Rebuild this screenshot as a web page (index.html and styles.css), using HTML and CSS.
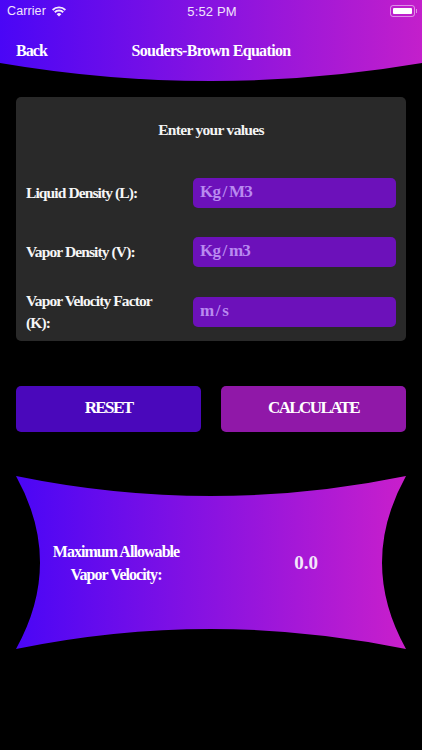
FILE: index.html
```html
<!DOCTYPE html>
<html lang="en">
<head>
<meta charset="utf-8">
<title>Souders-Brown Equation</title>
<link rel="stylesheet" href="styles.css">
</head>
<body>
<header class="header">
  <div class="status">
    <div class="status-left">
      <span>Carrier</span>
      <svg class="wifi" viewBox="0 0 16 12" aria-hidden="true"><path d="M8 11.8 5.3 9a3.8 3.8 0 0 1 5.4 0zM4 7.6 2.4 6a8 8 0 0 1 11.2 0L12 7.6a5.7 5.7 0 0 0-8 0zM1.4 5 0 3.5a11.4 11.4 0 0 1 16 0L14.6 5a9.4 9.4 0 0 0-13.2 0z"/></svg>
    </div>
    <div class="status-time">5:52 PM</div>
    <div class="status-right">
      <span class="battery"><span class="battery-fill"></span></span><span class="battery-cap"></span>
    </div>
  </div>
  <div class="nav">
    <span class="back">Back</span>
    <h1 class="title">Souders-Brown Equation</h1>
  </div>
</header>
<main class="content">
  <section class="panel">
    <h2 class="panel-title">Enter your values</h2>
    <div class="row row-first">
      <label class="row-label">Liquid Density (L):</label>
      <div class="field">Kg / M3</div>
    </div>
    <div class="row">
      <label class="row-label">Vapor Density (V):</label>
      <div class="field">Kg / m3</div>
    </div>
    <div class="row">
      <label class="row-label">Vapor Velocity Factor (K):</label>
      <div class="field">m / s</div>
    </div>
  </section>
  <div class="actions">
    <button class="btn btn-reset">RESET</button>
    <button class="btn btn-calc">CALCULATE</button>
  </div>
  <section class="result">
    <div class="result-label">Maximum Allowable<br>Vapor Velocity:</div>
    <div class="result-value">0.0</div>
  </section>
</main>
</body>
</html>
```
FILE: styles.css
```css
* { box-sizing: border-box; }
html, body { margin: 0; height: 100%; }
body {
  width: 422px;
  height: 750px;
  overflow: hidden;
  background: #000;
  color: #fff;
  font-family: "Liberation Serif", serif;
}
.header {
  height: 81px;
  padding-top: 1px;
  background: linear-gradient(90deg, #4a06f6 0%, #c31fcb 100%);
  clip-path: path("M0 0H422V63Q211 99 0 63Z");
}
.status {
  display: grid;
  grid-template-columns: 1fr auto 1fr;
  align-items: center;
  height: 20px;
  padding: 0 5px 0 7px;
  font: 400 12.5px "Liberation Sans", sans-serif;
  letter-spacing: .1px;
  color: #f1e3fb;
}
.status-left { display: flex; align-items: center; gap: 6px; }
.wifi { width: 14px; height: 11px; fill: #f4eafc; }
.status-time { font-size: 13px; letter-spacing: .15px; }
.status-right { display: flex; align-items: center; justify-content: flex-end; }
.battery {
  display: block;
  width: 25px;
  height: 12px;
  padding: 2px;
  border: 1px solid rgba(255,255,255,.5);
  border-radius: 3px;
}
.battery-fill { display: block; height: 100%; background: #fff; border-radius: 1px; }
.battery-cap { display: block; width: 1px; height: 4px; margin-left: 1px; background: rgba(255,255,255,.5); }
.nav {
  position: relative;
  height: 22px;
  margin-top: 19px;
  font-weight: 700;
  font-size: 16px;
  line-height: 22px;
  text-align: center;
}
.back { position: absolute; left: 16px; top: 0; letter-spacing: -.95px; }
.title { margin: 0; font: inherit; letter-spacing: -.66px; }
.content { padding: 16px 16px 0; }
.panel {
  height: 244px;
  padding: 1px 10px 0;
  background: #292929;
  border-radius: 5px;
}
.panel-title {
  margin: 0;
  height: 66px;
  font-size: 15.5px;
  line-height: 64px;
  font-weight: 700;
  text-align: center;
  letter-spacing: -.7px;
  color: #f4f4f4;
}
.row {
  display: grid;
  grid-template-columns: 167px 203px;
  grid-template-rows: 30px;
  align-items: center;
  margin-top: 29px;
}
.row-first { margin-top: 14px; }
.row:last-child { margin-top: 30px; }
.row-label {
  font-size: 15.5px;
  font-weight: 700;
  line-height: 22px;
  letter-spacing: -.9px;
  color: #f6f6f6;
  padding-right: 15px;
}
.field {
  height: 30px;
  padding-left: 7px;
  background: #6c11ba;
  border-radius: 5px;
  font-size: 17px;
  font-weight: 700;
  line-height: 28px;
  letter-spacing: -.8px;
  word-spacing: -1px;
  color: #b98af0;
}
.actions {
  display: grid;
  grid-template-columns: 185px 185px;
  gap: 20px;
  margin-top: 45px;
}
.btn {
  height: 46px;
  border: 0;
  border-radius: 5px;
  color: #fff;
  font: 700 17px/42px "Liberation Serif", serif;
  letter-spacing: -1.6px;
  padding: 0 0 2px;
}
.btn-reset { background: #4a08bb; }
.btn-calc { background: #9018a8; }
.result {
  display: grid;
  grid-template-columns: 200px 1fr;
  align-items: center;
  height: 173px;
  margin-top: 44px;
  background: linear-gradient(90deg, #4a06f6 0%, #c91fcb 100%);
  clip-path: path("M0 0Q195 40 390 0Q342 86.5 390 173Q195 133 0 173Q48 86.5 0 0Z");
}
.result-label {
  font-size: 16px;
  font-weight: 700;
  line-height: 23px;
  text-align: center;
  letter-spacing: -.95px;
}
.result-value {
  padding-right: 10px;
  font-size: 19px;
  font-weight: 700;
  text-align: center;
  color: #f3e6fb;
}
```
